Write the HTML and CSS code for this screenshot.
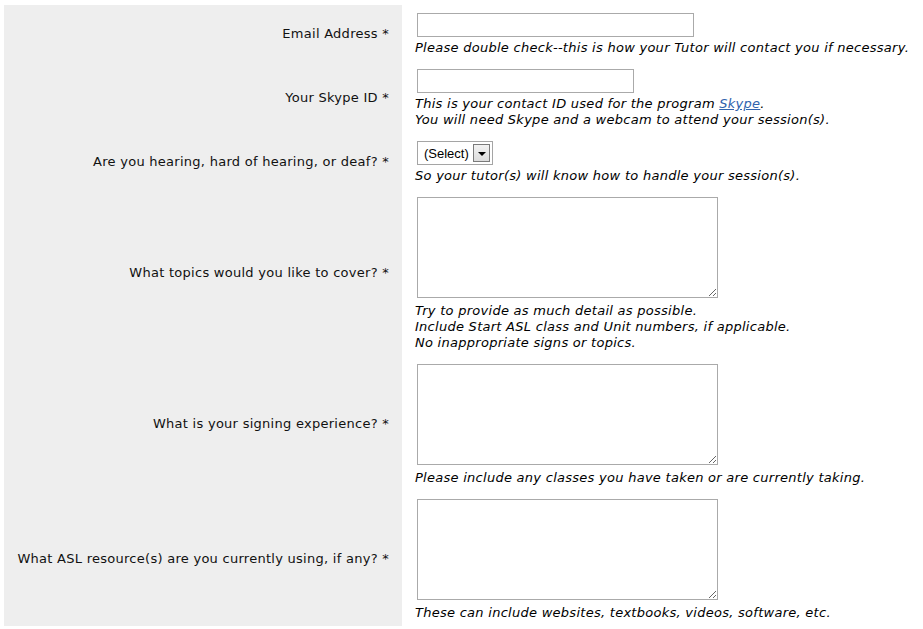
FILE: index.html
```html
<!DOCTYPE html>
<html lang="en">
<head>
    <meta charset="UTF-8">
    <title>Tutor session request</title>
    <link rel="stylesheet" href="styles.css">
</head>
<body>
<form class="signup-form">
    <div class="row">
        <label class="row-label" for="email">Email Address *</label>
        <div class="row-field">
            <input type="text" id="email" class="text-input">
            <div class="help">Please double check--this is how your Tutor will contact you if necessary.</div>
        </div>
    </div>
    <div class="row">
        <label class="row-label" for="skype">Your Skype ID *</label>
        <div class="row-field">
            <input type="text" id="skype" class="text-input short">
            <div class="help">This is your contact ID used for the program <a href="#">Skype</a>.<br>
                You will need Skype and a webcam to attend your session(s).</div>
        </div>
    </div>
    <div class="row">
        <label class="row-label" for="hearing">Are you hearing, hard of hearing, or deaf? *</label>
        <div class="row-field">
            <span class="select-wrap">
                <select id="hearing" class="select-box">
                    <option>(Select)</option>
                    <option>Hearing</option>
                    <option>Hard of hearing</option>
                    <option>Deaf</option>
                </select>
                <span class="select-btn"></span>
            </span>
            <div class="help">So your tutor(s) will know how to handle your session(s).</div>
        </div>
    </div>
    <div class="row">
        <label class="row-label" for="topics">What topics would you like to cover? *</label>
        <div class="row-field">
            <textarea id="topics" class="text-area"></textarea>
            <div class="help">Try to provide as much detail as possible.<br>
                Include Start ASL class and Unit numbers, if applicable.<br>
                No inappropriate signs or topics.</div>
        </div>
    </div>
    <div class="row">
        <label class="row-label" for="experience">What is your signing experience? *</label>
        <div class="row-field">
            <textarea id="experience" class="text-area"></textarea>
            <div class="help">Please include any classes you have taken or are currently taking.</div>
        </div>
    </div>
    <div class="row">
        <label class="row-label" for="resources">What ASL resource(s) are you currently using, if any? *</label>
        <div class="row-field">
            <textarea id="resources" class="text-area"></textarea>
            <div class="help">These can include websites, textbooks, videos, software, etc.</div>
        </div>
    </div>
</form>
</body>
</html>
```

FILE: styles.css
```css
body {
    margin: 0;
    background: #fff;
    font: 13px/16px "DejaVu Sans", Verdana, sans-serif;
    letter-spacing: 0.27px;
    color: #000;
}
.signup-form {
    margin: 5px 0 0 4px;
}
.row {
    display: grid;
    grid-template-columns: 398px 1fr;
}
.row-label {
    background: #eee;
    display: flex;
    align-items: center;
    justify-content: flex-end;
    text-align: right;
    padding: 1px 13px 0 0;
    color: #111;
}
.row-field {
    padding: 8px 0 5px 13px;
}
.text-input {
    display: block;
    box-sizing: border-box;
    width: 277px;
    height: 24px;
    margin: 0 0 3px 2px;
    border: 1px solid #aaa;
    padding: 2px 3px;
    font: 13px "DejaVu Sans", sans-serif;
}
.text-input.short {
    width: 217px;
}
.text-area {
    display: block;
    box-sizing: border-box;
    width: 301px;
    height: 101px;
    margin: 0 0 5px 2px;
    border: 1px solid #aaa;
    padding: 2px;
    font: 13px "DejaVu Sans", sans-serif;
}
.help {
    font-style: italic;
}
.help a {
    color: #3163ad;
}
.select-wrap {
    position: relative;
    display: block;
    width: 76px;
    height: 24px;
    margin: 0 0 3px 2px;
}
.select-box {
    appearance: none;
    -webkit-appearance: none;
    box-sizing: border-box;
    width: 76px;
    height: 24px;
    border: 1px solid #a5a5a5;
    border-radius: 0;
    background: #fff;
    padding: 0 0 0 6px;
    font: 13px "Liberation Sans", Arial, sans-serif;
    letter-spacing: 0;
    color: #000;
}
.select-btn {
    position: absolute;
    top: 3px;
    left: 56px;
    width: 15px;
    height: 16px;
    border: 1px solid #7a7a7a;
    background: linear-gradient(#f2f2f2, #dcdcdc);
    pointer-events: none;
}
.select-btn:after {
    content: "";
    position: absolute;
    left: 4px;
    top: 7px;
    border-left: 4px solid transparent;
    border-right: 4px solid transparent;
    border-top: 4px solid #000;
}
```
